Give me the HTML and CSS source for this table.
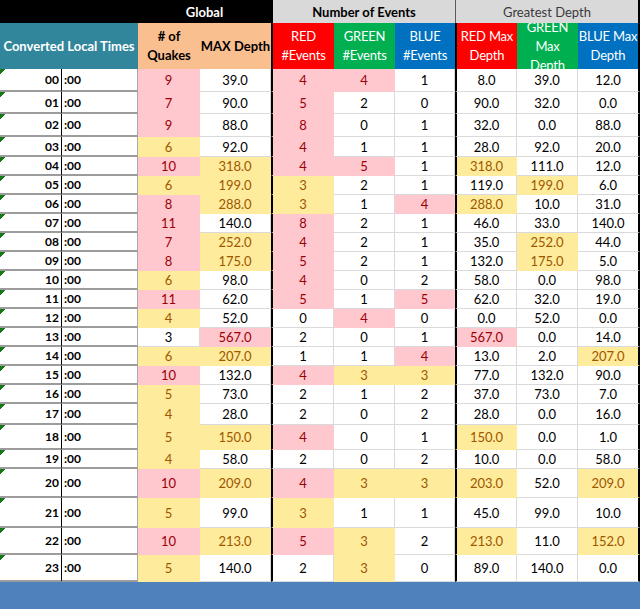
FILE: index.html
```html
<!DOCTYPE html>
<html>
<head>
<meta charset="utf-8">
<link rel="stylesheet" href="styles.css">
</head>
<body>
<div class="sheet">
  <div class="row top">
    <div class="c black span2"></div>
    <div class="c black span2 global">Global</div>
    <div class="c gray span3 events">Number of Events</div>
    <div class="c gray span3 depth">Greatest Depth</div>
  </div>
  <div class="row head">
    <div class="c teal span2">Converted Local Times</div>
    <div class="c orange">#&nbsp;of<br>Quakes</div>
    <div class="c orange">MAX Depth</div>
    <div class="c red bl">RED<br>#Events</div>
    <div class="c green">GREEN<br>#Events</div>
    <div class="c blue">BLUE<br>#Events</div>
    <div class="c red bl">RED Max<br>Depth</div>
    <div class="c green">GREEN<br>Max<br>Depth</div>
    <div class="c blue br">BLUE Max<br>Depth</div>
  </div>

  <div class="row data h23"><div class="c hr">00</div><div class="c mn">:00</div><div class="c p">9</div><div class="c">39.0</div><div class="c p">4</div><div class="c p">4</div><div class="c">1</div><div class="c">8.0</div><div class="c">39.0</div><div class="c">12.0</div></div>
  <div class="row data h22"><div class="c hr">01</div><div class="c mn">:00</div><div class="c p">7</div><div class="c">90.0</div><div class="c p">5</div><div class="c">2</div><div class="c">0</div><div class="c">90.0</div><div class="c">32.0</div><div class="c">0.0</div></div>
  <div class="row data h23"><div class="c hr">02</div><div class="c mn">:00</div><div class="c p">9</div><div class="c">88.0</div><div class="c p">8</div><div class="c">0</div><div class="c">1</div><div class="c">32.0</div><div class="c">0.0</div><div class="c">88.0</div></div>
  <div class="row data h20"><div class="c hr">03</div><div class="c mn">:00</div><div class="c y">6</div><div class="c">92.0</div><div class="c p">4</div><div class="c">1</div><div class="c">1</div><div class="c">28.0</div><div class="c">92.0</div><div class="c">20.0</div></div>
  <div class="row data h19"><div class="c hr">04</div><div class="c mn">:00</div><div class="c p">10</div><div class="c y">318.0</div><div class="c p">4</div><div class="c p">5</div><div class="c">1</div><div class="c y">318.0</div><div class="c">111.0</div><div class="c">12.0</div></div>
  <div class="row data h19"><div class="c hr">05</div><div class="c mn">:00</div><div class="c y">6</div><div class="c y">199.0</div><div class="c y">3</div><div class="c">2</div><div class="c">1</div><div class="c">119.0</div><div class="c y">199.0</div><div class="c">6.0</div></div>
  <div class="row data h19"><div class="c hr">06</div><div class="c mn">:00</div><div class="c p">8</div><div class="c y">288.0</div><div class="c y">3</div><div class="c">1</div><div class="c p">4</div><div class="c y">288.0</div><div class="c">10.0</div><div class="c">31.0</div></div>
  <div class="row data h19"><div class="c hr">07</div><div class="c mn">:00</div><div class="c p">11</div><div class="c">140.0</div><div class="c p">8</div><div class="c">2</div><div class="c">1</div><div class="c">46.0</div><div class="c">33.0</div><div class="c">140.0</div></div>
  <div class="row data h19"><div class="c hr">08</div><div class="c mn">:00</div><div class="c p">7</div><div class="c y">252.0</div><div class="c p">4</div><div class="c">2</div><div class="c">1</div><div class="c">35.0</div><div class="c y">252.0</div><div class="c">44.0</div></div>
  <div class="row data h19"><div class="c hr">09</div><div class="c mn">:00</div><div class="c p">8</div><div class="c y">175.0</div><div class="c p">5</div><div class="c">2</div><div class="c">1</div><div class="c">132.0</div><div class="c y">175.0</div><div class="c">5.0</div></div>
  <div class="row data h19"><div class="c hr">10</div><div class="c mn">:00</div><div class="c y">6</div><div class="c">98.0</div><div class="c p">4</div><div class="c">0</div><div class="c">2</div><div class="c">58.0</div><div class="c">0.0</div><div class="c">98.0</div></div>
  <div class="row data h19"><div class="c hr">11</div><div class="c mn">:00</div><div class="c p">11</div><div class="c">62.0</div><div class="c p">5</div><div class="c">1</div><div class="c p">5</div><div class="c">62.0</div><div class="c">32.0</div><div class="c">19.0</div></div>
  <div class="row data h19"><div class="c hr">12</div><div class="c mn">:00</div><div class="c y">4</div><div class="c">52.0</div><div class="c">0</div><div class="c p">4</div><div class="c">0</div><div class="c">0.0</div><div class="c">52.0</div><div class="c">0.0</div></div>
  <div class="row data h19"><div class="c hr">13</div><div class="c mn">:00</div><div class="c">3</div><div class="c p">567.0</div><div class="c">2</div><div class="c">0</div><div class="c">1</div><div class="c p">567.0</div><div class="c">0.0</div><div class="c">14.0</div></div>
  <div class="row data h19"><div class="c hr">14</div><div class="c mn">:00</div><div class="c y">6</div><div class="c y">207.0</div><div class="c">1</div><div class="c">1</div><div class="c p">4</div><div class="c">13.0</div><div class="c">2.0</div><div class="c y">207.0</div></div>
  <div class="row data h19"><div class="c hr">15</div><div class="c mn">:00</div><div class="c p">10</div><div class="c">132.0</div><div class="c p">4</div><div class="c y">3</div><div class="c y">3</div><div class="c">77.0</div><div class="c">132.0</div><div class="c">90.0</div></div>
  <div class="row data h19"><div class="c hr">16</div><div class="c mn">:00</div><div class="c y">5</div><div class="c">73.0</div><div class="c">2</div><div class="c">1</div><div class="c">2</div><div class="c">37.0</div><div class="c">73.0</div><div class="c">7.0</div></div>
  <div class="row data h21"><div class="c hr">17</div><div class="c mn">:00</div><div class="c y">4</div><div class="c">28.0</div><div class="c">2</div><div class="c">0</div><div class="c">2</div><div class="c">28.0</div><div class="c">0.0</div><div class="c">16.0</div></div>
  <div class="row data h25"><div class="c hr">18</div><div class="c mn">:00</div><div class="c y">5</div><div class="c y">150.0</div><div class="c p">4</div><div class="c">0</div><div class="c">1</div><div class="c y">150.0</div><div class="c">0.0</div><div class="c">1.0</div></div>
  <div class="row data h19"><div class="c hr">19</div><div class="c mn">:00</div><div class="c y">4</div><div class="c">58.0</div><div class="c">2</div><div class="c">0</div><div class="c">2</div><div class="c">10.0</div><div class="c">0.0</div><div class="c">58.0</div></div>
  <div class="row data h29"><div class="c hr">20</div><div class="c mn">:00</div><div class="c p">10</div><div class="c y">209.0</div><div class="c p">4</div><div class="c y">3</div><div class="c y">3</div><div class="c y">203.0</div><div class="c">52.0</div><div class="c y">209.0</div></div>
  <div class="row data h30"><div class="c hr">21</div><div class="c mn">:00</div><div class="c y">5</div><div class="c">99.0</div><div class="c y">3</div><div class="c">1</div><div class="c">1</div><div class="c">45.0</div><div class="c">99.0</div><div class="c">10.0</div></div>
  <div class="row data h27"><div class="c hr">22</div><div class="c mn">:00</div><div class="c p">10</div><div class="c y">213.0</div><div class="c p">5</div><div class="c y">3</div><div class="c">2</div><div class="c y">213.0</div><div class="c">11.0</div><div class="c y">152.0</div></div>
  <div class="row data h27"><div class="c hr">23</div><div class="c mn">:00</div><div class="c y">5</div><div class="c">140.0</div><div class="c">2</div><div class="c y">3</div><div class="c">0</div><div class="c">89.0</div><div class="c">140.0</div><div class="c">0.0</div></div>

  <div class="bar"></div>
</div>
</body>
</html>
```
FILE: styles.css
```css
body {
  margin: 0;
  background: #ffffff;
  font-family: Lato, "Open Sans", sans-serif;
  font-size: 13px;
  color: #000000;
}

.sheet {
  width: 640px;
  display: flex;
  flex-direction: column;
}

.row {
  display: grid;
  grid-template-columns: 62px 76px 62px 71px 63px 61px 60px 62px 61px 62px;
}

.c {
  box-sizing: border-box;
  display: flex;
  align-items: center;
  justify-content: center;
  text-align: center;
  overflow: hidden;
  min-width: 0;
}

.span2 { grid-column: span 2; }
.span3 { grid-column: span 3; }

/* top header row */
.top {
  height: 23px;
  font-weight: 700;
}
.black { background: #000000; color: #ffffff; }
.gray { background: #d9d9d9; }
.events {
  color: #000000;
  border-left: 2px solid #000000;
}
.depth {
  font-weight: 400;
  color: #3a3a3a;
  border-left: 1px solid #5a5a5a;
  border-right: 2px solid #000000;
}

/* second header row */
.head {
  height: 46px;
  line-height: 19px;
}
.head .c {
  white-space: nowrap;
}
.teal { background: #31869b; color: #ffffff; font-weight: 700; }
.orange { background: #fabf8f; color: #000000; font-weight: 700; }
.red { background: #ff0000; color: #ffffff; }
.green { background: #00b050; color: #ffffff; }
.blue { background: #0070c0; color: #ffffff; }
.head .red, .head .green, .head .blue { letter-spacing: -0.2px; }
.bl { border-left: 2px solid #000000; }
.br { border-right: 2px solid #000000; }

/* data rows */
.h19 { height: 19px; }
.h20 { height: 20px; }
.h21 { height: 21px; }
.h22 { height: 22px; }
.h23 { height: 23px; }
.h25 { height: 25px; }
.h27 { height: 27px; }
.h29 { height: 29px; }
.h30 { height: 30px; }

.data .c {
  border-right: 1px solid #dadada;
  border-bottom: 1px solid #dadada;
  background-color: #ffffff;
}
.data .c:nth-child(5),
.data .c:nth-child(8) {
  border-left: 2px solid #000000;
}
.data .c:nth-child(10) {
  border-right: 2px solid #000000;
}

.data .hr {
  justify-content: flex-end;
  padding-right: 2px;
  font-weight: 700;
  font-size: 12px;
  border-right: 1px solid #000000;
  border-bottom: 2px solid #9c9c9c;
  background-image: linear-gradient(135deg, #157a15 0, #157a15 3.6px, transparent 3.6px);
  background-size: 7px 7px;
  background-repeat: no-repeat;
}
.data .mn {
  justify-content: flex-start;
  padding-left: 2px;
  font-weight: 700;
  font-size: 12px;
  border-right: 1px solid #a8a8a8;
  border-bottom: 2px solid #9c9c9c;
}

.data .p {
  background-color: #ffc7ce;
  color: #9c0006;
  border-bottom-color: #ffc7ce;
}
.data .y {
  background-color: #ffeb9c;
  color: #9c5700;
  border-bottom-color: #ffeb9c;
}
.data .p:not(:nth-child(10)) { border-right-color: #ffc7ce; }
.data .y:not(:nth-child(10)) { border-right-color: #ffeb9c; }

.bar {
  height: 27px;
  background: #4f81bd;
}
```
